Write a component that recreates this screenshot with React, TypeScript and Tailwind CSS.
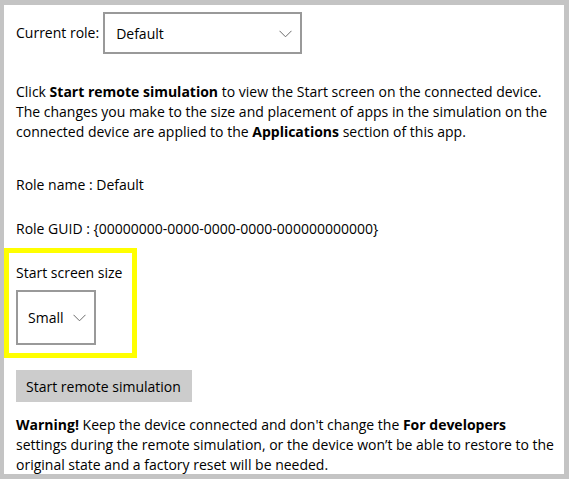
import React from "react";

function Chevron() {
  return (
    <svg width="13" height="8" viewBox="0 0 13 8" className="shrink-0">
      <path d="M0.5 0.8 L6.5 6.8 L12.5 0.8" fill="none" stroke="#6b6b6b" strokeWidth="1" />
    </svg>
  );
}

export default function App() {
  return (
    <div
      className="h-[479px] w-[569px] overflow-hidden border-t-[5px] border-l-[4px] border-r-[5px] border-b-[5px] border-[#c4c4c4] bg-white text-[14px] leading-5 text-black"
      style={{ fontFamily: '"Open Sans", "Noto Sans", sans-serif' }}
    >
      <div className="flex items-center pt-[7px] pl-3">
        <span>Current role:</span>
        <div className="ml-[4px] flex h-[42px] w-[199px] items-center justify-between border-2 border-[#999999] pt-px pl-[11px] pr-[8px]">
          <span>Default</span>
          <Chevron />
        </div>
      </div>

      <p className="mt-[28px] pl-3 pr-1">
        Click <b>Start remote simulation</b> to view the Start screen on the connected device.
        <br />
        The changes you make to the size and placement of apps in the simulation on the
        <br />
        connected device are applied to the <b>Applications</b> section of this app.
      </p>

      <p className="mt-[33px] pl-3">Role name : Default</p>
      <p className="mt-[24px] pl-3">Role GUID : {"{00000000-0000-0000-0000-000000000000}"}</p>

      <div className="mt-[9px] h-[110px] w-[133px] border-[5px] border-[#ffff00] pt-[10px] pl-[7px]">
        <p>Start screen size</p>
        <div className="mt-[7px] flex h-[55px] w-[80px] items-center justify-between border-2 border-[#999999] pt-px pl-[10px] pr-[8px]">
          <span>Small</span>
          <Chevron />
        </div>
      </div>

      <div className="mt-3 pl-3">
        <button className="h-8 w-[176px] bg-[#cccccc] pt-px text-left pl-[10px]">Start remote simulation</button>
      </div>

      <p className="mt-[13px] pl-3 pr-0">
        <b>Warning!</b> Keep the device connected and don't change the <b>For developers</b>
        <br />
        settings during the remote simulation, or the device won’t be able to restore to the
        <br />
        original state and a factory reset will be needed.
      </p>
    </div>
  );
}
